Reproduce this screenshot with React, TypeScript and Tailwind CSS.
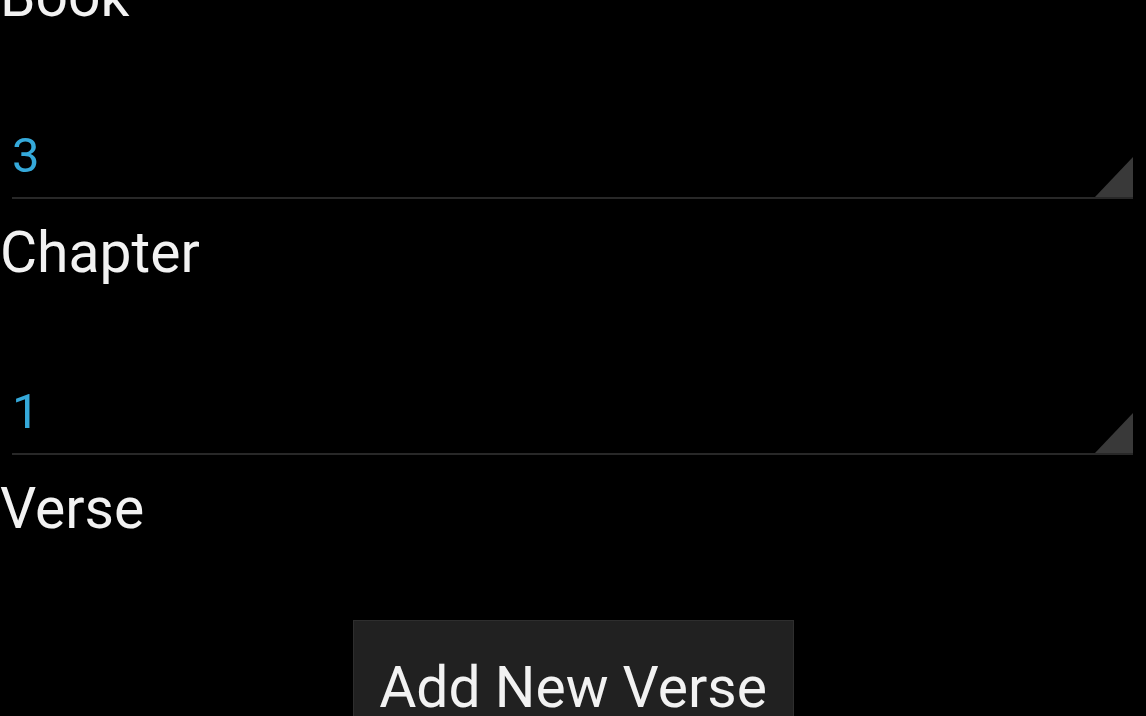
export default function App() {
  const fields = [
    { label: 'Book', value: '3' },
    { label: 'Chapter', value: '1' },
    { label: 'Verse', value: null },
  ]

  return (
    <div
      className="h-[716px] w-[1146px] overflow-hidden bg-black text-[#f2f2f2]"
      style={{ fontFamily: 'Roboto, "Noto Sans", sans-serif' }}
    >
      <div className="-mt-[32px] flex flex-col">
        {fields.map((f, i) => (
          <div key={f.label} className="flex flex-col">
            <div className={i === 0 ? 'text-[57px] leading-[57px]' : 'mt-[25px] text-[57px] leading-[57px]'}>
              {f.label}
            </div>
            {f.value && (
              <div className="ml-[12px] mr-[13px] mt-[107px] flex items-end border-b-2 border-[#282828]">
                <div className="flex-1 pb-[17px] text-[49px] leading-[48px] text-[#35a9da]">{f.value}</div>
                <svg width="38" height="40" viewBox="0 0 38 40" className="block">
                  <polygon points="38,0 38,40 0,40" fill="#393939" />
                </svg>
              </div>
            )}
          </div>
        ))}

        {/* Add button */}
        <div className="mt-[83px] flex justify-center">
          <button className="flex h-[120px] w-[441px] items-start justify-center border border-[#2e2e2e] bg-[#212121] pt-[38px] text-[57px] leading-[57px] text-[#f2f2f2]">
            Add New Verse
          </button>
        </div>
      </div>
    </div>
  )
}
